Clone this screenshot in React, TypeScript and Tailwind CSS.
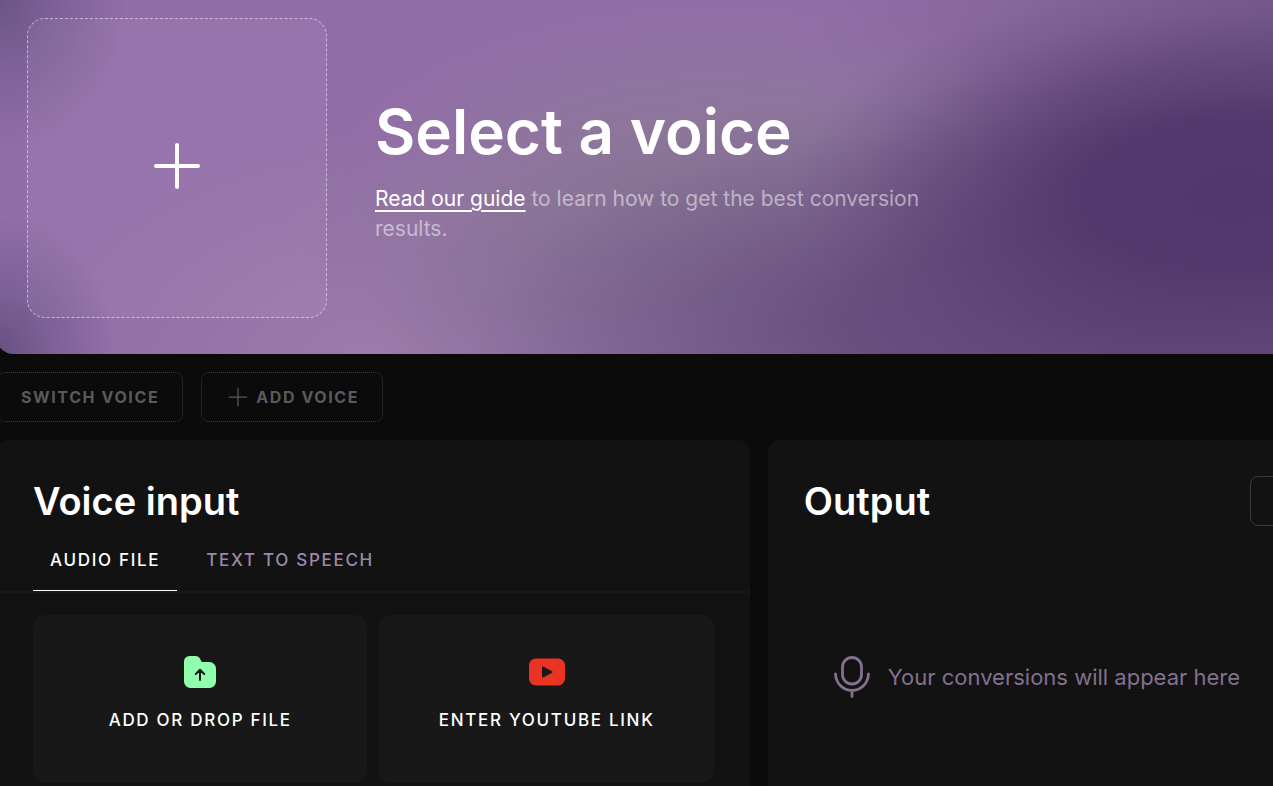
import React, { useState } from 'react';

interface SourceCardProps {
  label: string;
  icon: React.ReactNode;
}

const PlusIcon: React.FC<{ className?: string; strokeWidth: number }> = ({ className, strokeWidth }) => (
  <svg viewBox="0 0 48 48" className={className} fill="none" stroke="currentColor" strokeWidth={strokeWidth} strokeLinecap="round">
    <path d="M24 3V45M3 24H45" />
  </svg>
);

const FolderUploadIcon = () => (
  <svg viewBox="0 0 36 36" className="h-9 w-9" fill="none">
    <path
      d="M2 7.5A5.5 5.5 0 0 1 7.5 2H13.5C15.5 2 17 3 18 4.8L19 6.8C19.4 7.6 20.2 8 21 8H27.5A6.5 6.5 0 0 1 34 14.5V27.5A6.5 6.5 0 0 1 27.5 34H8.5A6.5 6.5 0 0 1 2 27.5Z"
      fill="#90ffac"
    />
    <path d="M18 26V16.5M13.8 20L18 15.8L22.2 20" stroke="#181818" strokeWidth="2" strokeLinecap="round" strokeLinejoin="round" />
  </svg>
);

const YoutubeIcon = () => (
  <svg viewBox="0 0 36 36" className="h-9 w-9">
    <rect x="0" y="4.5" width="36" height="27" rx="7" fill="#eb3323" />
    <path d="M13 13.2C13 12.6 13.6 12.3 14.1 12.5L23 17.2C23.7 17.6 23.7 18.4 23 18.8L14.1 23.5C13.6 23.7 13 23.4 13 22.8Z" fill="#181818" />
  </svg>
);

const MicIcon = () => (
  <svg viewBox="0 0 36 42" className="h-[42px] w-9 shrink-0" fill="none" stroke="currentColor" strokeWidth="2.8" strokeLinecap="round">
    <rect x="8.5" y="1.5" width="19" height="26.5" rx="9.5" />
    <path d="M1.5 18C2 27.5 9 34.5 18 34.5S34 27.5 34.5 18M18 34.5V40.5" />
  </svg>
);

const SourceCard: React.FC<SourceCardProps> = ({ label, icon }) => (
  <button className="flex h-[168px] flex-1 flex-col items-center justify-center gap-4 rounded-xl bg-[#181818] pb-2.5 text-[17px] leading-7 font-medium tracking-widest text-white">
    {icon}
    {label}
  </button>
);

const tabs = ['AUDIO FILE', 'TEXT TO SPEECH'];

const App = () => {
  const [activeTab, setActiveTab] = useState(tabs[0]);

  return (
    <div className="min-h-screen overflow-hidden bg-[#0b0b0b] font-['Inter',sans-serif] text-white">
      <div className="-ml-[3px]">
        {/* Voice picker */}
        <section className="flex items-center gap-12 rounded-bl-2xl bg-[radial-gradient(ellipse_130px_150px_at_0%_0%,#6a5485_0%,#6f578a90_45%,#80609800_100%),radial-gradient(ellipse_120px_140px_at_0%_100%,#665080_0%,#6d568890_45%,#80609800_100%),radial-gradient(ellipse_440px_210px_at_97%_54%,#52366c_0%,#53376cf0_35%,#573b6e90_62%,#5e427430_85%,#62477800_100%),radial-gradient(ellipse_760px_240px_at_88%_90%,#60457a_0%,#634979e0_35%,#6b528290_62%,#75608b30_85%,#7d6a9000_100%),radial-gradient(ellipse_420px_220px_at_56%_60%,#8b7996_0%,#8b7997c0_40%,#8e7a9b60_70%,#926da700_100%),radial-gradient(ellipse_360px_240px_at_30%_105%,#a07cab_0%,#9b78a890_50%,#936da800_100%),linear-gradient(98deg,#926da7_0%,#926da7_62%,#866699_78%,#75588a_100%)] pt-[18px] pb-9 pl-[30px]">
          <button
            aria-label="Select a voice"
            className="flex h-[300px] w-[300px] shrink-0 items-center justify-center rounded-[18px] border border-dashed border-white/50 bg-white/5 pb-1"
          >
            <PlusIcon className="h-12 w-12" strokeWidth={4} />
          </button>
          <div className="max-w-[576px] pt-1">
            <h1 className="text-[62px] leading-[72px] font-semibold">Select a voice</h1>
            <p className="mt-4 text-[21px] leading-[30px] text-white/50">
              <a href="#guide" className="text-white underline decoration-2 underline-offset-4">Read our guide</a> to learn how to get the best conversion results.
            </p>
          </div>
        </section>

        <div className="mt-[18px] flex gap-[18px] text-base font-bold tracking-widest text-[#5a5a5a]">
          <button className="h-[50px] rounded-lg border border-dotted border-[#3a3a3a] px-[23px]">SWITCH VOICE</button>
          <button className="flex h-[50px] items-center gap-2 rounded-lg border border-dotted border-[#3a3a3a] pr-[23px] pl-[26px]">
            <PlusIcon className="h-5 w-5" strokeWidth={3} />
            ADD VOICE
          </button>
        </div>

        <div className="mt-[18px] flex gap-[18px]">
          <section className="w-[59%] shrink-0 rounded-xl bg-[#121212] pt-9 pb-10">
            <h2 className="px-9 text-[38px] leading-[50px] font-semibold">Voice input</h2>
            <div role="tablist" className="mt-2 flex gap-3 border-b-2 border-[#181818] px-9">
              {tabs.map((tab) => (
                <button
                  key={tab}
                  role="tab"
                  aria-selected={activeTab === tab}
                  onClick={() => setActiveTab(tab)}
                  className={`h-[57px] border-b px-[17px] pb-0.5 text-[17px] font-medium tracking-widest ${
                    activeTab === tab ? 'border-white text-white' : 'border-transparent text-[#9c89a8]'
                  }`}
                >
                  {tab}
                </button>
              ))}
            </div>
            <div className="mt-[22px] flex gap-3 px-9">
              <SourceCard label="ADD OR DROP FILE" icon={<FolderUploadIcon />} />
              <SourceCard label="ENTER YOUTUBE LINK" icon={<YoutubeIcon />} />
            </div>
          </section>

          {/* Output runs past the right edge of the window */}
          <section className="-mr-36 flex-1 rounded-xl bg-[#121212] px-9 pt-9">
            <div className="flex items-center justify-between">
              <h2 className="text-[38px] leading-[50px] font-semibold">Output</h2>
              <button aria-label="Output options" className="h-[50px] w-[131px] rounded-lg border border-[#3a3a3a]" />
            </div>
            <div className="mt-[130px] flex items-center gap-[18px] pl-[30px] text-[22px] whitespace-nowrap text-[#84708f]">
              <MicIcon />
              <p>Your conversions will appear here</p>
            </div>
          </section>
        </div>
      </div>
    </div>
  );
};

export default App;
